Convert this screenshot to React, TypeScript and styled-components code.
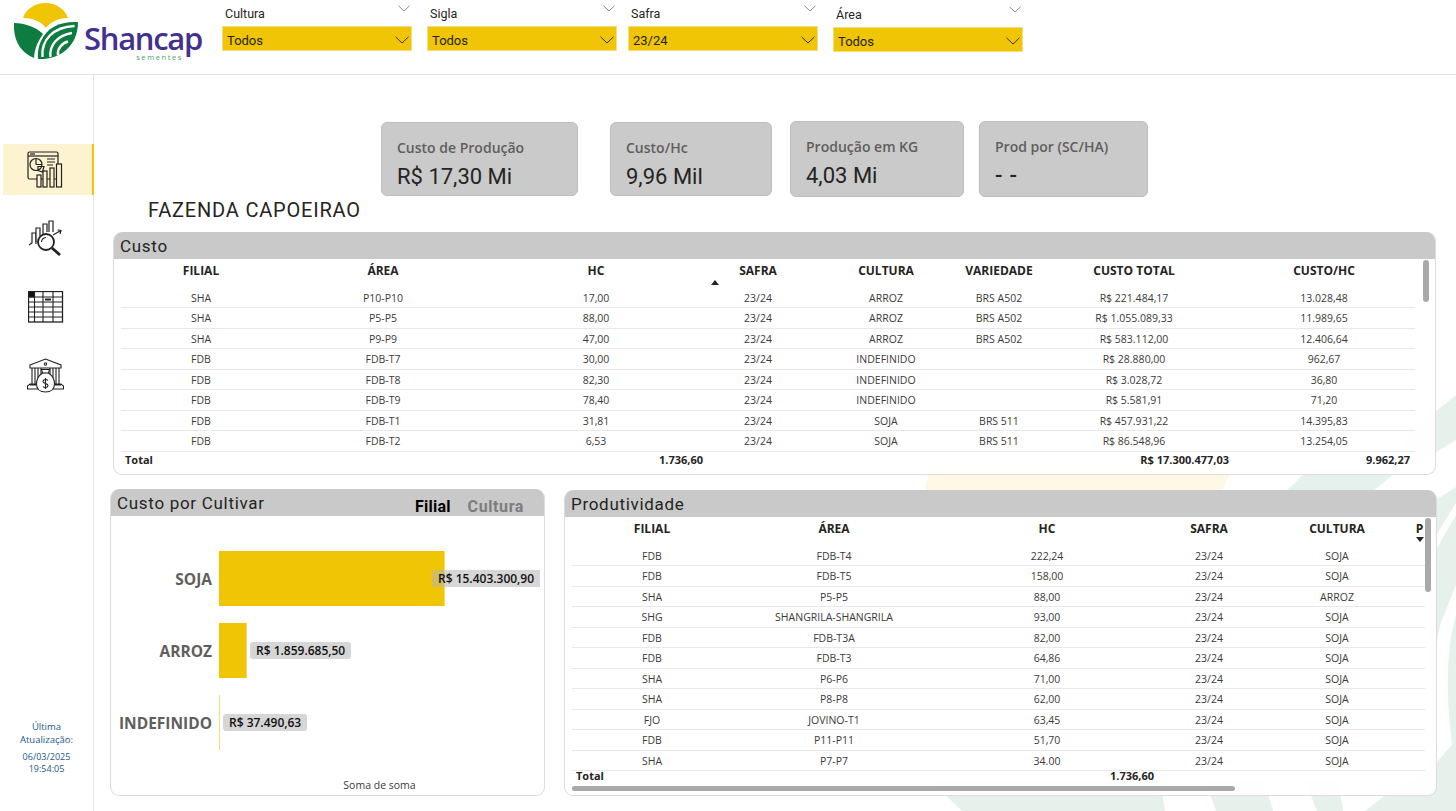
import React from "react";
import styled, { createGlobalStyle } from "styled-components";

const din = `Roboto, "Liberation Sans", sans-serif`;
const seg = `"Open Sans", "Noto Sans", sans-serif`;

const Global = createGlobalStyle`
  html, body { margin: 0; padding: 0; background: #fff; }
  body { font-family: ${seg}; color: #252423; overflow: hidden; }
`;

const Page = styled.div`
  position: relative;
  width: 1456px;
  height: 811px;
  overflow: hidden;
`;
const Watermark = styled.svg`
  position: absolute;
  inset: 0;
`;
const Content = styled.div`
  position: relative;
  display: flex;
  flex-direction: column;
  height: 100%;
`;
const Header = styled.header`
  display: flex;
  align-items: flex-start;
  height: 74px;
  border-bottom: 1px solid #e3e3e3;
  flex: none;
`;
const Logo = styled.div`
  display: flex;
  width: 222px;
  height: 74px;
  flex: none;
  padding: 3px 0 0 14px;
  box-sizing: border-box;
`;
const Brand = styled.div`
  display: flex;
  flex-direction: column;
  align-items: flex-end;
  margin: 20px 0 0 5px;
`;
const BrandName = styled.span`
  font-family: ${seg};
  font-weight: 600;
  font-size: 31px;
  line-height: 30px;
  letter-spacing: -1.3px;
  color: #43318f;
`;
const BrandSub = styled.span`
  font-size: 7.5px;
  line-height: 7px;
  letter-spacing: 1.6px;
  color: #4f9f73;
  margin: 1px 19px 0 0;
`;
const Slicer = styled.div<{ $w: number; $ml: number; $mt?: number }>`
  width: ${(p) => p.$w}px;
  margin-left: ${(p) => p.$ml}px;
  margin-top: ${(p) => p.$mt ?? 0}px;
  flex: none;
`;
const SlicerHead = styled.div`
  display: flex;
  justify-content: space-between;
  align-items: flex-start;
  height: 26px;
  padding: 5px 2px 0 3px;
  box-sizing: border-box;
  font-family: ${din};
  font-size: 12.5px;
  line-height: 18px;
  color: #252423;
`;
const SlicerBox = styled.div`
  display: flex;
  justify-content: space-between;
  align-items: center;
  height: 25px;
  box-sizing: border-box;
  padding: 3px 2px 0 4px;
  background: #f0c505;
  border: 1px solid #f4dd82;
  font-family: ${din};
  font-size: 13px;
  color: #252423;
`;
const Body = styled.div`
  display: flex;
  flex: 1;
  min-height: 0;
`;
const Rail = styled.nav`
  width: 94px;
  flex: none;
  box-sizing: border-box;
  border-right: 1px solid #e3e3e3;
  padding: 69px 0 36px 3px;
  display: flex;
  flex-direction: column;
  gap: 17.5px;
`;
const RailItem = styled.div<{ $active?: boolean }>`
  height: 51px;
  display: flex;
  align-items: center;
  justify-content: center;
  padding-right: 4px;
  background: ${(p) => (p.$active ? "#fdf3d0" : "transparent")};
  border-right: 2px solid ${(p) => (p.$active ? "#f0c505" : "transparent")};
  margin-right: -1px;
`;
const Update = styled.div`
  margin: auto 0 0 -3px;
  text-align: center;
  color: #1a5a8a;
  font-size: 9.5px;
  line-height: 13px;
`;
const UpdateDate = styled.div`
  margin-top: 5px;
  line-height: 12px;
  font-size: 9px;
`;
const Main = styled.main`
  flex: 1;
  min-width: 0;
  display: flex;
  flex-direction: column;
`;
const KpiRow = styled.section`
  display: flex;
  align-items: center;
  height: 76px;
  margin: 46px 0 0 287px;
`;
const Kpi = styled.div<{ $w: number; $ml: number; $tall?: boolean }>`
  width: ${(p) => p.$w}px;
  margin-left: ${(p) => p.$ml}px;
  height: ${(p) => (p.$tall ? 76 : 74)}px;
  box-sizing: border-box;
  background: #cacaca;
  border: 1px solid #bdbdbd;
  border-radius: 6px;
  padding: 15px 15px 0;
`;
const KpiLabel = styled.div`
  font-size: 14px;
  font-weight: 600;
  line-height: 20px;
  color: #605e5c;
  white-space: nowrap;
`;
const KpiValue = styled.div<{ $spaced?: boolean }>`
  font-family: ${din};
  font-size: 22px;
  line-height: 28px;
  margin-top: 5px;
  letter-spacing: ${(p) => (p.$spaced ? "7px" : "0")};
  font-weight: ${(p) => (p.$spaced ? 500 : 400)};
  color: #252423;
`;
const PageTitle = styled.h1`
  margin: 0 0 0 54px;
  height: 35px;
  font-family: ${din};
  font-weight: 400;
  font-size: 20px;
  line-height: 26px;
  letter-spacing: 0.8px;
  color: #252423;
`;
const Card = styled.section<{ $w: number; $h: number; $ml: number; $mt?: number }>`
  width: ${(p) => p.$w}px;
  height: ${(p) => p.$h}px;
  margin-left: ${(p) => p.$ml}px;
  margin-top: ${(p) => p.$mt ?? 0}px;
  box-sizing: border-box;
  flex: none;
  background: rgba(255, 255, 255, 0.93);
  border: 1px solid #dcdcdc;
  border-top: none;
  border-radius: 9px;
  display: flex;
  flex-direction: column;
  overflow: hidden;
`;
const CardBar = styled.div`
  display: flex;
  align-items: center;
  justify-content: space-between;
  height: 27px;
  flex: none;
  background: #c9c9c9;
  padding: 0 20px 0 6px;
  font-family: ${din};
  font-size: 17px;
  letter-spacing: 0.7px;
  color: #252423;
`;
const Tabs = styled.div`
  display: flex;
  gap: 17px;
  padding-top: 7px;
`;
const Tab = styled.span<{ $on?: boolean }>`
  font-weight: 700;
  font-size: 16px;
  letter-spacing: ${(p) => (p.$on ? "0.2px" : "0.6px")};
  color: ${(p) => (p.$on ? "#000" : "#7d7d7d")};
`;
const TableArea = styled.div<{ $pl: number }>`
  display: flex;
  flex: 1;
  min-height: 0;
  padding-left: ${(p) => p.$pl}px;
`;
const TableInner = styled.div<{ $w: number }>`
  width: ${(p) => p.$w}px;
  flex: none;
  overflow: hidden;
`;
const GRID = "160px 204px 222px 102px 154px 72px 198px 182px";
const GRID2 = "160px 204px 222px 102px 154px 11px";
const THead = styled.div<{ $cols: string; $h: number }>`
  display: grid;
  grid-template-columns: ${(p) => p.$cols};
  height: ${(p) => p.$h}px;
  font-size: 12px;
  font-weight: 700;
  line-height: 24px;
  text-align: center;
  color: #252423;
`;
const THeadCell = styled.div`
  position: relative;
  white-space: nowrap;
  overflow: hidden;
  height: 100%;
`;
const Arrow = styled.span<{ $up?: boolean }>`
  position: absolute;
  left: ${(p) => (p.$up ? "226px" : "2px")};
  top: ${(p) => (p.$up ? "21px" : "20px")};
  width: 0;
  height: 0;
  border-left: 4px solid transparent;
  border-right: 4px solid transparent;
  ${(p) =>
    p.$up
      ? "border-bottom: 5px solid #252423;"
      : "border-top: 5px solid #252423;"}
`;
const HeadCellOpen = styled(THeadCell)`
  overflow: visible;
`;
const TRow = styled.div<{ $cols: string }>`
  display: grid;
  grid-template-columns: ${(p) => p.$cols};
  height: 20.5px;
  box-sizing: border-box;
  border-bottom: 1px solid #e8e8e8;
  font-size: 10.5px;
  line-height: 20px;
  text-align: center;
  color: #3b3a39;
  &:last-of-type {
    border-bottom: none;
  }
`;
const TCell = styled.div`
  white-space: nowrap;
`;
const TotalRow = styled.div<{ $cols: string; $mt: number }>`
  display: grid;
  grid-template-columns: ${(p) => p.$cols};
  margin-top: ${(p) => p.$mt}px;
  height: 14px;
  font-size: 11px;
  font-weight: 700;
  line-height: 14px;
  color: #252423;
  text-align: right;
`;
const TotalLabel = styled.div`
  text-align: left;
  padding-left: 4px;
`;
const VBar = styled.div<{ $ml: number; $h: number }>`
  width: 6px;
  height: ${(p) => p.$h}px;
  margin: 1px 0 0 ${(p) => p.$ml}px;
  background: #a9a9a9;
  border-radius: 3px;
  flex: none;
`;
const HBar = styled.div`
  width: 663px;
  height: 5px;
  margin-top: 3px;
  background: #a9a9a9;
  border-radius: 3px;
`;
const BottomRow = styled.div`
  display: flex;
  align-items: flex-start;
  margin-top: 14px;
`;
const Chart = styled.div`
  display: flex;
  flex-direction: column;
  flex: 1;
  padding: 35px 0 0 7px;
  gap: 17px;
`;
const ChartRow = styled.div`
  display: flex;
  align-items: center;
  height: 55px;
`;
const Cat = styled.div`
  width: 94px;
  margin-right: 7px;
  flex: none;
  text-align: right;
  font-weight: 700;
  font-size: 15.5px;
  line-height: 20px;
  color: #605e5c;
  white-space: nowrap;
`;
const Bar = styled.div`
  height: 55px;
  box-sizing: border-box;
  background: #f0c505;
  border-right: 1px solid #f6dd70;
  flex: none;
`;
const DataLabel = styled.div<{ $ml: number; $square?: boolean }>`
  margin: -1px 0 0 ${(p) => p.$ml}px;
  height: 17px;
  padding: 0 6px;
  flex: none;
  background: rgba(180, 180, 180, 0.55);
  border-radius: ${(p) => (p.$square ? "3px 0 0 3px" : "3px")};
  font-size: 12px;
  font-weight: 600;
  line-height: 17px;
  color: #111;
  white-space: nowrap;
`;
const AxisTitle = styled.div`
  text-align: center;
  font-size: 10.5px;
  line-height: 14px;
  margin: 0 0 3px 104px;
  color: #3b3a39;
`;

const Chevron = () => (
  <svg width="14" height="8" viewBox="0 0 14 8" fill="none" stroke="#333" strokeWidth="1">
    <path d="M0.5 0.8 L7 7 L13.5 0.8" />
  </svg>
);
const ChevronLight = () => (
  <svg width="12" height="7" viewBox="0 0 12 7" fill="none" stroke="#7a7a8a" strokeWidth="0.9">
    <path d="M0.5 0.8 L6 6 L11.5 0.8" />
  </svg>
);

const LogoMark = () => (
  <svg width="65" height="57" viewBox="14 3 65 57">
    <path d="M23 18 C26 9 35 3 45.5 3 C56 3 65 9 68 18 C60 18 51 21 46 28 C41 21 32 18 23 18Z" fill="#f0c505" />
    <path d="M14 23 C25 23 36 27 43 34 C38 41 34.5 49 34 58 C21 53 13 41 14 23Z" fill="#0e7c40" />
    <path d="M78 22 C61 21 47 27 41 41 C38 48 37.5 54 38 59 C59 60 78 47 78 22Z" fill="#0e7c40" />
    <g fill="none" stroke="#fff" strokeWidth="2.4">
      <path d="M42.5 57 C41 40 53 27 74.5 26" />
      <path d="M50.5 57 C49 45 58 35 72 33" />
      <path d="M58 55 C57 49 62 43 68 41.5" />
    </g>
  </svg>
);

const DashIcon = () => (
  <svg width="37" height="37" viewBox="0 0 37 37" fill="#fff" stroke="#222" strokeWidth="1.2">
    <rect x="1" y="1" width="30" height="27" rx="1.5" fill="#fdf3d0" />
    <path d="M1 5 H31" />
    <path d="M3 3 H8" />
    <circle cx="9" cy="13.5" r="6" fill="none" />
    <path d="M9 13.5 V7.5 M9 13.5 H15" />
    <path d="M11 15.5 H17 L15.5 21 L11 19.5Z" fill="none" />
    <path d="M20 8 H28 M20 11 H28 M20 14 H26" />
    <rect x="10" y="24" width="4" height="12" fill="#fdf3d0" />
    <rect x="16" y="20" width="4" height="16" fill="#fdf3d0" />
    <rect x="23" y="17" width="4" height="19" fill="#fdf3d0" />
    <rect x="29.5" y="13" width="5" height="23" fill="#fdf3d0" />
  </svg>
);
const SearchIcon = () => (
  <svg width="36" height="36" viewBox="0 0 36 36" fill="#fff" stroke="#222" strokeWidth="1.2">
    <path d="M1 25 L4 23 V13 H8 V24" />
    <path d="M8 22 V8 H12 V16" />
    <path d="M15 14 V4 H19 V12" />
    <path d="M21 12 V1 H25 V12" />
    <path d="M25 15 L32 11 M29.5 10 L33 10.5 L32 14" fill="none" />
    <circle cx="18" cy="22" r="8" strokeWidth="1.8" />
    <path d="M13.5 22 A5 5 0 0 1 18 17.5" fill="none" />
    <path d="M24 28 L32 35" strokeWidth="2.8" />
  </svg>
);
const TableIcon = () => (
  <svg width="36" height="32" viewBox="0 0 36 32" fill="none" stroke="#222" strokeWidth="1.1">
    <rect x="0.5" y="0.5" width="34" height="30.5" fill="#fff" strokeWidth="1.3" />
    <rect x="1" y="1" width="5.5" height="5" fill="#111" />
    <path d="M0.5 6 H35 M0.5 11 H35 M0.5 16 H35 M0.5 21 H35 M0.5 26 H35" />
    <path d="M6.5 0.5 V31 M15 0.5 V31 M25 0.5 V31" />
    <path d="M17 8.5 H23" strokeWidth="2" />
  </svg>
);
const BankIcon = () => (
  <svg width="37" height="35" viewBox="0 0 37 35" fill="#fff" stroke="#222" strokeWidth="1.1">
    <path d="M3 7 L18.5 1 L34 7 V10 H3Z" />
    <circle cx="18.5" cy="6" r="1.2" />
    <path d="M5 10 V26 M8 10 V26 M11 10 V26 M14 10 V26 M23 10 V26 M26 10 V26 M29 10 V26 M32 10 V26" />
    <path d="M3 27 H34 M0.5 31 H36.5 V28 L34 26 H3 L0.5 28Z" />
    <path d="M15.5 15 L14.5 11.5 H22.5 L21.5 15 C26 18 27.5 22 27.5 26 C27.5 31 24 34 18.5 34 C13 34 9.5 31 9.5 26 C9.5 22 11 18 15.5 15Z" />
    <path d="M15.5 15 H21.5" />
    <path d="M21 22.5 C20 21 16 21 16 23.5 C16 26 21 25 21 27.5 C21 30 17 30 16 28.5 M18.5 20 V31" fill="none" />
  </svg>
);

const slicers = [
  { label: "Cultura", value: "Todos", w: 190, ml: 0, mt: 0 },
  { label: "Sigla", value: "Todos", w: 190, ml: 15, mt: 0 },
  { label: "Safra", value: "23/24", w: 190, ml: 11, mt: 0 },
  { label: "Área", value: "Todos", w: 190, ml: 15, mt: 1 },
];
const kpis = [
  { label: "Custo de Produção", value: "R$ 17,30 Mi", w: 197, ml: 0, tall: false },
  { label: "Custo/Hc", value: "9,96 Mil", w: 162, ml: 32, tall: false },
  { label: "Produção em KG", value: "4,03 Mi", w: 174, ml: 18, tall: true },
  { label: "Prod por (SC/HA)", value: "--", w: 169, ml: 15, tall: true },
];
const custoHead = ["FILIAL", "ÁREA", "HC", "SAFRA", "CULTURA", "VARIEDADE", "CUSTO TOTAL", "CUSTO/HC"];
const custoRows = [
  ["SHA", "P10-P10", "17,00", "23/24", "ARROZ", "BRS A502", "R$ 221.484,17", "13.028,48"],
  ["SHA", "P5-P5", "88,00", "23/24", "ARROZ", "BRS A502", "R$ 1.055.089,33", "11.989,65"],
  ["SHA", "P9-P9", "47,00", "23/24", "ARROZ", "BRS A502", "R$ 583.112,00", "12.406,64"],
  ["FDB", "FDB-T7", "30,00", "23/24", "INDEFINIDO", "", "R$ 28.880,00", "962,67"],
  ["FDB", "FDB-T8", "82,30", "23/24", "INDEFINIDO", "", "R$ 3.028,72", "36,80"],
  ["FDB", "FDB-T9", "78,40", "23/24", "INDEFINIDO", "", "R$ 5.581,91", "71,20"],
  ["FDB", "FDB-T1", "31,81", "23/24", "SOJA", "BRS 511", "R$ 457.931,22", "14.395,83"],
  ["FDB", "FDB-T2", "6,53", "23/24", "SOJA", "BRS 511", "R$ 86.548,96", "13.254,05"],
];
const prodHead = ["FILIAL", "ÁREA", "HC", "SAFRA", "CULTURA", "P"];
const prodRows = [
  ["FDB", "FDB-T4", "222,24", "23/24", "SOJA"],
  ["FDB", "FDB-T5", "158,00", "23/24", "SOJA"],
  ["SHA", "P5-P5", "88,00", "23/24", "ARROZ"],
  ["SHG", "SHANGRILA-SHANGRILA", "93,00", "23/24", "SOJA"],
  ["FDB", "FDB-T3A", "82,00", "23/24", "SOJA"],
  ["FDB", "FDB-T3", "64,86", "23/24", "SOJA"],
  ["SHA", "P6-P6", "71,00", "23/24", "SOJA"],
  ["SHA", "P8-P8", "62,00", "23/24", "SOJA"],
  ["FJO", "JOVINO-T1", "63,45", "23/24", "SOJA"],
  ["FDB", "P11-P11", "51,70", "23/24", "SOJA"],
  ["SHA", "P7-P7", "34.00", "23/24", "SOJA"],
];
const bars = [
  { cat: "SOJA", w: 226, label: "R$ 15.403.300,90", ml: -13, square: true },
  { cat: "ARROZ", w: 28, label: "R$ 1.859.685,50", ml: 3, square: false },
  { cat: "INDEFINIDO", w: 1, label: "R$ 37.490,63", ml: 3, square: false },
];

export default function App() {
  return (
    <Page>
      <Global />
      <Watermark width="1456" height="811" viewBox="0 0 1456 811">
        <path d="M918 520 L930 468 H1232 L1210 520Z" fill="#fff8e4" />
        <g fill="#e7f1ec">
          <path d="M1280 497 L1310 468 H1402 L1365 497Z" />
          <path d="M1400 440 L1456 395 V440 L1420 462Z" />
          <path d="M1430 504 L1456 487 V503 L1430 545Z" />
          <path d="M1430 560 L1456 515 V585 L1440 625 L1430 680Z" />
          <path d="M1456 615 C1446 650 1444 700 1456 770Z" />
          <path d="M930 780 H1160 L1165 811 H962Z" />
          <path d="M1205 780 H1264 L1273 811 H1216Z" />
          <path d="M1305 780 H1338 L1343 811 H1317Z" />
          <path d="M1383 797 L1430 770 L1456 740 V811 H1365Z" />
        </g>
      </Watermark>
      <Content>
        <Header>
          <Logo>
            <LogoMark />
            <Brand>
              <BrandName>Shancap</BrandName>
              <BrandSub>sementes</BrandSub>
            </Brand>
          </Logo>
          {slicers.map((s) => (
            <Slicer key={s.label} $w={s.w} $ml={s.ml} $mt={s.mt}>
              <SlicerHead>
                {s.label}
                <ChevronLight />
              </SlicerHead>
              <SlicerBox>
                {s.value}
                <Chevron />
              </SlicerBox>
            </Slicer>
          ))}
        </Header>
        <Body>
          <Rail>
            <RailItem $active>
              <DashIcon />
            </RailItem>
            <RailItem>
              <SearchIcon />
            </RailItem>
            <RailItem>
              <TableIcon />
            </RailItem>
            <RailItem>
              <BankIcon />
            </RailItem>
            <Update>
              Última
              <br />
              Atualização:
              <UpdateDate>
                06/03/2025
                <br />
                19:54:05
              </UpdateDate>
            </Update>
          </Rail>
          <Main>
            <KpiRow>
              {kpis.map((k) => (
                <Kpi key={k.label} $w={k.w} $ml={k.ml} $tall={k.tall}>
                  <KpiLabel>{k.label}</KpiLabel>
                  <KpiValue $spaced={k.value === "--"}>{k.value}</KpiValue>
                </Kpi>
              ))}
            </KpiRow>
            <PageTitle>FAZENDA CAPOEIRAO</PageTitle>
            <Card $w={1323} $h={243} $ml={19}>
              <CardBar>Custo</CardBar>
              <TableArea $pl={7}>
                <TableInner $w={1294}>
                  <THead $cols={GRID} $h={28.6}>
                    {custoHead.map((h, i) =>
                      i === 2 ? (
                        <HeadCellOpen key={h}>
                          {h}
                          <Arrow $up />
                        </HeadCellOpen>
                      ) : (
                        <THeadCell key={h}>{h}</THeadCell>
                      )
                    )}
                  </THead>
                  {custoRows.map((r) => (
                    <TRow key={r[1]} $cols={GRID}>
                      {r.map((c, i) => (
                        <TCell key={i}>{c}</TCell>
                      ))}
                    </TRow>
                  ))}
                  <TotalRow $cols="60px 522px 526px 181px" $mt={1.4}>
                    <TotalLabel>Total</TotalLabel>
                    <div>1.736,60</div>
                    <div>R$ 17.300.477,03</div>
                    <div>9.962,27</div>
                  </TotalRow>
                </TableInner>
                <VBar $ml={8} $h={42} />
              </TableArea>
            </Card>
            <BottomRow>
              <Card $w={435} $h={307} $ml={16}>
                <CardBar>
                  Custo por Cultivar
                  <Tabs>
                    <Tab $on>Filial</Tab>
                    <Tab>Cultura</Tab>
                  </Tabs>
                </CardBar>
                <Chart>
                  {bars.map((b) => (
                    <ChartRow key={b.cat}>
                      <Cat>{b.cat}</Cat>
                      <Bar style={{ width: b.w }} />
                      <DataLabel $ml={b.ml} $square={b.square}>
                        {b.label}
                      </DataLabel>
                    </ChartRow>
                  ))}
                </Chart>
                <AxisTitle>Soma de soma</AxisTitle>
              </Card>
              <Card $w={873} $h={306} $ml={19} $mt={1}>
                <CardBar>Produtividade</CardBar>
                <TableArea $pl={7}>
                  <TableInner $w={853}>
                    <THead $cols={GRID2} $h={28.6}>
                      {prodHead.map((h, i) =>
                        i === 5 ? (
                          <HeadCellOpen key={h}>
                            {h}
                            <Arrow />
                          </HeadCellOpen>
                        ) : (
                          <THeadCell key={h}>{h}</THeadCell>
                        )
                      )}
                    </THead>
                    {prodRows.map((r) => (
                      <TRow key={r[1]} $cols={GRID2}>
                        {r.map((c, i) => (
                          <TCell key={i}>{c}</TCell>
                        ))}
                      </TRow>
                    ))}
                    <TotalRow $cols="60px 522px" $mt={-2.6}>
                      <TotalLabel>Total</TotalLabel>
                      <div>1.736,60</div>
                    </TotalRow>
                    <HBar />
                  </TableInner>
                  <VBar $ml={0} $h={74} />
                </TableArea>
              </Card>
            </BottomRow>
          </Main>
        </Body>
      </Content>
    </Page>
  );
}
